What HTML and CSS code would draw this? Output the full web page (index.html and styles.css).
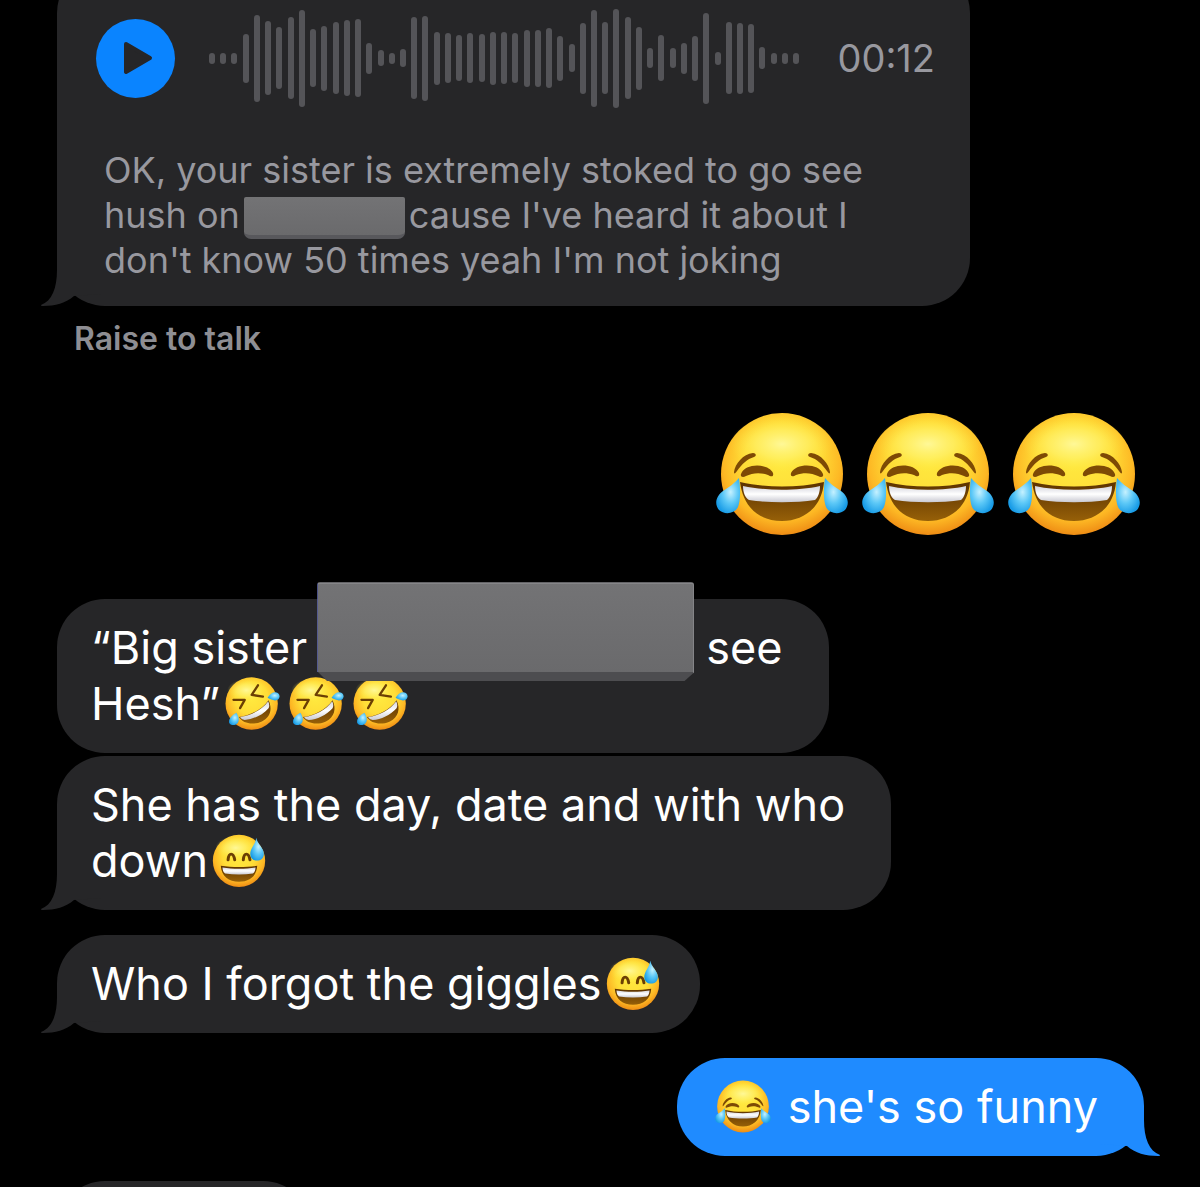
FILE: index.html
```html
<!DOCTYPE html>
<html lang="en">
<head>
    <meta charset="UTF-8">
    <meta name="viewport" content="width=device-width, initial-scale=1.0">
    <title>Messages</title>
    <link rel="stylesheet" href="styles.css">
</head>
<body>
    <!-- shared shapes -->
    <svg class="sprite" aria-hidden="true">
        <defs>
            <radialGradient id="face" cx="0.5" cy="0.4" r="0.62">
                <stop offset="0" stop-color="#ffe93f"/>
                <stop offset="0.5" stop-color="#ffdd37"/>
                <stop offset="0.78" stop-color="#fdb824"/>
                <stop offset="1" stop-color="#ec8512"/>
            </radialGradient>
            <radialGradient id="shine">
                <stop offset="0" stop-color="#fff99c" stop-opacity="0.95"/>
                <stop offset="0.5" stop-color="#fff472" stop-opacity="0.6"/>
                <stop offset="1" stop-color="#ffe93f" stop-opacity="0"/>
            </radialGradient>
            <linearGradient id="teeth" x1="0" y1="0" x2="0" y2="1">
                <stop offset="0" stop-color="#d4d4dc"/>
                <stop offset="0.5" stop-color="#ffffff"/>
                <stop offset="1" stop-color="#c9c9d2"/>
            </linearGradient>
            <linearGradient id="mouth" x1="0" y1="0" x2="0" y2="1">
                <stop offset="0" stop-color="#5c3200"/>
                <stop offset="1" stop-color="#966008"/>
            </linearGradient>
            <radialGradient id="tear" cx="0.6" cy="0.4" r="0.65">
                <stop offset="0" stop-color="#c5f1ff"/>
                <stop offset="0.5" stop-color="#5cc8f7"/>
                <stop offset="1" stop-color="#189be6"/>
            </radialGradient>
        </defs>

        <symbol id="joy" viewBox="0 0 132 124">
            <circle cx="66" cy="62" r="61" fill="url(#face)"/>
            <ellipse cx="66" cy="32" rx="52" ry="28" fill="url(#shine)"/>
            <g id="joy-side">
                <path d="M18 60C19 52 27 42 37 41C40 41 41 44 38 45C31 47 26 52 21 59C19 62 18 62 18 60Z" fill="#7d4a05"/>
                <path d="M25 62C29 51 52 51 57 61C58 65 55 65 52 63C44 60 36 61 30 64C27 66 24 65 25 62Z" fill="#7d4a05"/>
            </g>
            <use href="#joy-side" transform="matrix(-1 0 0 1 132 0)"/>
            <path d="M24 70C50 76 82 76 108 70C106 95 88 109 66 109C42 109 27 94 24 70Z" fill="url(#mouth)"/>
            <path d="M27 74C50 79 82 79 104 74C104 80 102 86 99 88C80 91 52 91 33 88C29 86 27 80 27 74Z" fill="url(#teeth)"/>
            <path id="joy-tear" d="M23 66C25 80 24 90 22 95C19 102 8 103 3 98C-2 92 0 84 7 79C13 75 19 71 23 66Z" fill="url(#tear)"/>
            <use href="#joy-tear" transform="matrix(-1 0 0 1 132 0)"/>
        </symbol>

        <symbol id="rofl" viewBox="18 24 168 160">
            <circle cx="101" cy="104" r="79" fill="url(#face)"/>
            <ellipse cx="85" cy="64" rx="58" ry="34" fill="url(#shine)"/>
            <g fill="none" stroke="#6b3f04" stroke-width="7" stroke-linecap="round" stroke-linejoin="round">
                <path d="M120 49L101 78L135 83"/>
                <path d="M46 93L80 93L66 118"/>
            </g>
            <path d="M62 145C95 141 132 123 152 94C164 120 158 145 132 158C106 170 76 166 62 145Z" fill="url(#mouth)"/>
            <path d="M66 145C98 141 133 123 151 97C155 106 155 113 152 118C132 140 106 151 80 154C73 153 69 150 66 145Z" fill="url(#teeth)"/>
            <path d="M149 87C157 72 170 67 180 72C187 77 187 88 179 93C170 97 160 93 149 87Z" fill="url(#tear)"/>
            <path d="M55 132C64 147 64 158 57 165C49 172 36 170 33 161C31 150 41 140 55 132Z" fill="url(#tear)"/>
        </symbol>

        <symbol id="sweat" viewBox="34 26 168 160">
            <circle cx="115" cy="107" r="79" fill="url(#face)"/>
            <ellipse cx="105" cy="68" rx="62" ry="36" fill="url(#shine)"/>
            <g fill="none" stroke="#6b3f04" stroke-width="9" stroke-linecap="round">
                <path d="M82 104C84 81 98 81 102 104"/>
                <path d="M128 104C130 81 144 81 148 104"/>
            </g>
            <path d="M60 122C94 127 136 127 170 122C168 154 146 170 115 170C84 170 62 154 60 122Z" fill="url(#mouth)"/>
            <path d="M65 127C97 132 133 132 165 127C164 137 161 143 157 145C130 149 100 149 73 145C68 142 66 136 65 127Z" fill="url(#teeth)"/>
            <path d="M167 37C171 57 190 68 190 86C190 99 181 106 169 106C157 106 149 98 149 86C149 69 165 57 167 37Z" fill="url(#tear)"/>
        </symbol>

        <symbol id="tail" viewBox="0 0 60 48">
            <path d="M16 0V12C16 30 11 43 0 47C0 48 1 48 2 48C14 48 25 45 33 38L60 36V0Z"/>
        </symbol>
    </svg>

    <main class="thread">
        <section class="bubble received audio">
            <div class="player">
                <button class="play" type="button" aria-label="Play">
                    <svg viewBox="0 0 79 79" aria-hidden="true"><path d="M30 25L54 39L30 53Z"/></svg>
                </button>
                <div class="wave" id="wave"></div>
                <time class="duration">00:12</time>
            </div>
            <p class="transcript">OK, your sister is extremely stoked to go see<br>hush on<span class="redacted small"></span>cause I've heard it about I<br>don't know 50 times yeah I'm not joking</p>
            <svg class="tail" aria-hidden="true"><use href="#tail"/></svg>
        </section>
        <p class="hint">Raise to talk</p>

        <div class="big-emoji">
            <svg role="img" aria-label="tears of joy"><use href="#joy"/></svg>
            <svg role="img" aria-label="tears of joy"><use href="#joy"/></svg>
            <svg role="img" aria-label="tears of joy"><use href="#joy"/></svg>
        </div>

        <p class="bubble received">“Big sister<span class="redacted large"></span>see<br>Hesh”<svg class="emoji" role="img" aria-label="rofl"><use href="#rofl"/></svg><svg class="emoji" role="img" aria-label="rofl"><use href="#rofl"/></svg><svg class="emoji" role="img" aria-label="rofl"><use href="#rofl"/></svg></p>

        <p class="bubble received grouped">She has the day, date and with who<br>down<svg class="emoji" role="img" aria-label="sweat smile"><use href="#sweat"/></svg>
            <svg class="tail" aria-hidden="true"><use href="#tail"/></svg>
        </p>

        <p class="bubble received next short">Who I forgot the giggles<svg class="emoji" role="img" aria-label="sweat smile"><use href="#sweat"/></svg>
            <svg class="tail" aria-hidden="true"><use href="#tail"/></svg>
        </p>

        <p class="bubble sent next"><svg class="emoji" role="img" aria-label="tears of joy"><use href="#joy"/></svg> she's so funny
            <svg class="tail" aria-hidden="true"><use href="#tail"/></svg>
        </p>

        <div class="bubble received next incoming"></div>
    </main>

    <script>
        const levels = [
            11, 11, 11, 49, 87, 74, 62, 82, 97, 58, 65, 72, 76, 78, 31, 16, 11, 18,
            82, 85, 53, 50, 46, 50, 48, 53, 52, 50, 57, 57, 60, 45, 28, 71, 97, 72,
            99, 82, 63, 20, 46, 20, 31, 45, 91, 13, 72, 71, 69, 22, 11, 11, 11
        ];
        const wave = document.getElementById('wave');

        levels.forEach(level => {
            const bar = document.createElement('span');
            bar.style.height = level + 'px';
            wave.appendChild(bar);
        });
    </script>
</body>
</html>
```
FILE: styles.css
```css
* {
    box-sizing: border-box;
}

body {
    margin: 0;
    height: 100vh;
    overflow: hidden;
    background-color: #000;
    color: #fff;
    font-family: Inter, "Liberation Sans", sans-serif;
}

p {
    margin: 0;
}

.sprite {
    position: absolute;
    width: 0;
    height: 0;
}

/* starts a little above the window, as if scrolled */
.thread {
    display: flex;
    flex-direction: column;
    align-items: flex-start;
    margin-top: -35px;
    padding: 0 56px 0 57px;
}

.bubble {
    position: relative;
    isolation: isolate;
    padding: 21px 46px 21px 34px;
    border-radius: 48px;
    font-size: 45px;
    line-height: 56px;
}

.received {
    background-color: #262628;
    color: #fff;
    fill: #262628;
}

.sent {
    align-self: flex-end;
    background-color: #1f8bff;
    fill: #1f8bff;
}

.short {
    padding-right: 34px;
}

.grouped {
    margin-top: 3px;
}

.next {
    margin-top: 25px;
}

/* sits under the text of its bubble */
.tail {
    position: absolute;
    z-index: -1;
    left: -16px;
    bottom: 0;
    width: 60px;
    height: 48px;
}

.sent .tail {
    left: auto;
    right: -16px;
    transform: scaleX(-1);
}

/* audio message */
.audio {
    width: 100%;
    max-width: 913px;
    padding: 43px 35px 23px 39px;
}

.player {
    display: flex;
    align-items: center;
    height: 100px;
    margin-bottom: 40px;
}

.play {
    flex: none;
    width: 79px;
    height: 79px;
    padding: 0;
    border: none;
    border-radius: 50%;
    background-color: #0a84ff;
    cursor: pointer;
}

.play svg {
    display: block;
    fill: #262628;
    stroke: #262628;
    stroke-width: 4;
    stroke-linejoin: round;
}

.wave {
    display: flex;
    flex: 1;
    align-items: center;
    justify-content: space-between;
    margin: 0 38px 0 34px;
}

.wave span {
    width: 6px;
    border-radius: 3px;
    background-color: #545458;
}

.duration {
    color: #98989f;
    font-size: 38px;
    line-height: 45px;
}

.transcript {
    padding-left: 8px;
    color: #98989f;
    font-size: 36px;
    line-height: 45px;
    white-space: nowrap;
}

.hint {
    margin: 16px 0 0 17px;
    color: #8e8e93;
    font-size: 32px;
    font-weight: 600;
    line-height: 34px;
}

/* blocks that cover names */
.redacted {
    position: relative;
    z-index: 1;
    display: inline-block;
    vertical-align: middle;
    background: linear-gradient(#737375, #6a6a6c);
}

.small {
    width: 161px;
    height: 42px;
    margin: -4px 4px;
    border-bottom: 4px solid #58585c;
    border-radius: 2px 2px 7px 7px;
}

.large {
    width: 377px;
    height: 99px;
    margin: -50px 12px -10px 10px;
    border-top: 2px solid #858588;
    border-right: 1px solid #858588;
    border-bottom: 9px solid #4d4d50;
    border-left: 1px solid #6770b8;
    border-radius: 3px;
    clip-path: polygon(0 0, 100% 0, 100% 90px, 367px 100%, 10px 100%, 0 89px);
}

.emoji {
    width: 56px;
    height: 53px;
    margin: -6px 4px;
    vertical-align: -4px;
}

.big-emoji {
    display: flex;
    align-self: flex-end;
    gap: 14px;
    margin: 56px 4px 63px 0;
}

.big-emoji svg {
    width: 132px;
    height: 124px;
}

.incoming {
    width: 254px;
    height: 98px;
}
```
